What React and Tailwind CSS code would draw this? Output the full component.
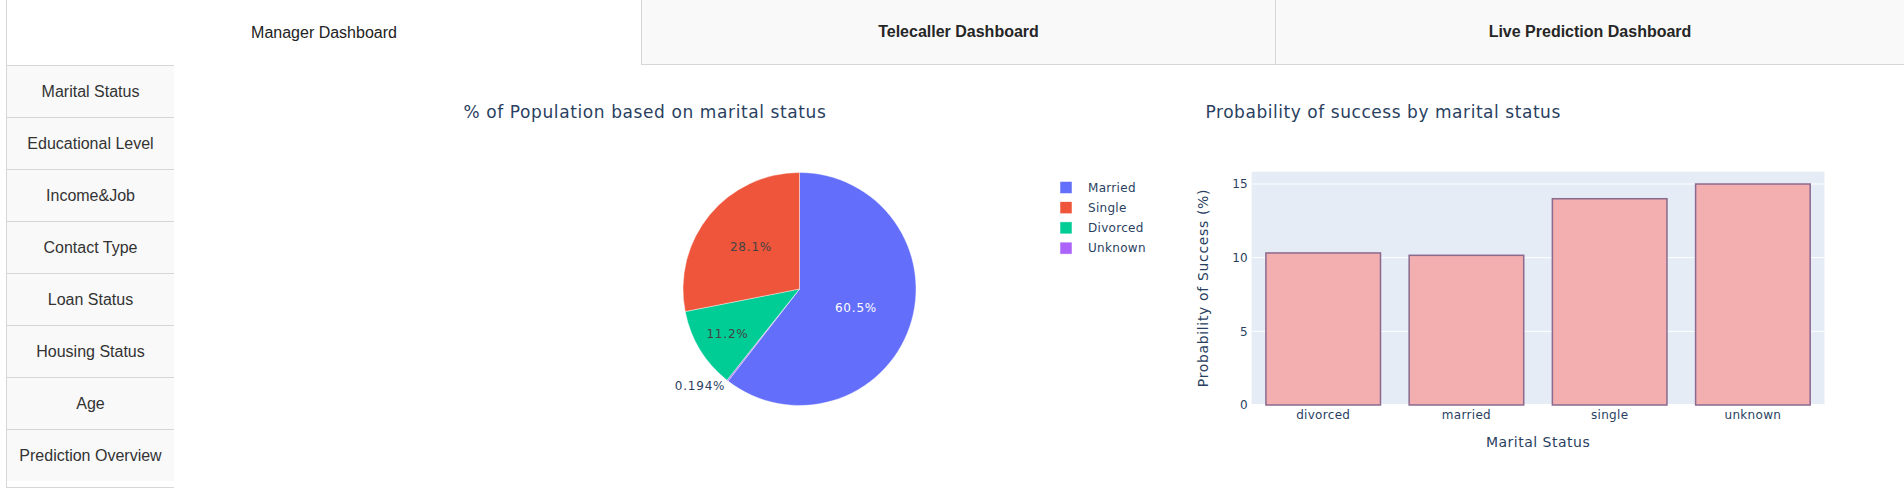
import React from "react";

const PLOT_FONT = "'DejaVu Sans', Verdana, sans-serif";

function PieChart() {
  const cx = 625.5;
  const cy = 224;
  const r = 116.5;
  const slices = [
    { v: 60.5, c: "#636efa" },
    { v: 0.194, c: "#ab63fa" },
    { v: 11.2, c: "#00cc96" },
    { v: 28.1, c: "#EF553B" },
  ];
  const total = slices.reduce((s, x) => s + x.v, 0);
  let acc = 0;
  const pt = (deg) => {
    const a = (deg * Math.PI) / 180;
    return [cx + r * Math.sin(a), cy - r * Math.cos(a)];
  };
  const paths = slices.map((s, i) => {
    const a0 = (acc / total) * 360;
    acc += s.v;
    const a1 = (acc / total) * 360;
    const [x0, y0] = pt(a0);
    const [x1, y1] = pt(a1);
    const large = a1 - a0 > 180 ? 1 : 0;
    const d = `M${cx},${cy} L${x0},${y0} A${r},${r} 0 ${large} 1 ${x1},${y1} Z`;
    return <path key={i} d={d} fill={s.c} stroke="#ffffff" strokeWidth="0.4" />;
  });
  const legend = [
    { t: "Married", c: "#636efa" },
    { t: "Single", c: "#EF553B" },
    { t: "Divorced", c: "#00cc96" },
    { t: "Unknown", c: "#ab63fa" },
  ];
  return (
    <svg width="1000" height="423" fontFamily={PLOT_FONT} className="block shrink-0">
      <text x="289.5" y="53" fontSize="17" fill="#2a3f5f" letterSpacing="0.6">
        % of Population based on marital status
      </text>
      {paths}
      <text x="682" y="247" fontSize="12" fill="#ffffff" textAnchor="middle" letterSpacing="0.8">60.5%</text>
      <text x="577" y="186" fontSize="12" fill="#444444" textAnchor="middle" letterSpacing="0.8">28.1%</text>
      <text x="553.5" y="273" fontSize="12" fill="#444444" textAnchor="middle" letterSpacing="0.8">11.2%</text>
      <text x="526" y="325" fontSize="12" fill="#2a3f5f" textAnchor="middle" letterSpacing="0.8">0.194%</text>
      {legend.map((l, i) => (
        <g key={l.t}>
          <rect x="886" y={116.5 + i * 20.2} width="12" height="12" fill={l.c} stroke="#ffffff" strokeWidth="0.5" />
          <text x="914" y={126.8 + i * 20.2} fontSize="12" fill="#2a3f5f" letterSpacing="0.3">
            {l.t}
          </text>
        </g>
      ))}
    </svg>
  );
}

function BarChart() {
  const left = 77.6;
  const right = 650.5;
  const top = 106.7;
  const bottom = 340;
  const unit = (bottom - 119) / 15;
  const cats = [
    { t: "divorced", v: 10.32 },
    { t: "married", v: 10.16 },
    { t: "single", v: 14.0 },
    { t: "unknown", v: 15.0 },
  ];
  const cw = (right - left) / 4;
  const bw = cw * 0.8;
  const ticks = [0, 5, 10, 15];
  return (
    <svg width="730" height="423" fontFamily={PLOT_FONT} className="block shrink-0">
      <text x="31.5" y="53" fontSize="17" fill="#2a3f5f" letterSpacing="0.55">
        Probability of success by marital status
      </text>
      <rect x={left} y={top} width={right - left} height={bottom - top} fill="#E5ECF6" />
      {ticks.map((t) => (
        <g key={t}>
          <line
            x1={left}
            x2={right}
            y1={bottom - t * unit}
            y2={bottom - t * unit}
            stroke="#ffffff"
            strokeWidth={t === 0 ? 2 : 1}
          />
          <text x="74" y={bottom - t * unit + 4.2} fontSize="12" fill="#2a3f5f" textAnchor="end" letterSpacing="0.3">
            {t}
          </text>
        </g>
      ))}
      {cats.map((c, i) => {
        const x = left + i * cw + (cw - bw) / 2;
        const h = c.v * unit;
        return (
          <g key={c.t}>
            <rect
              x={x}
              y={bottom - h}
              width={bw}
              height={h}
              fill="#F3AEB0"
              stroke="#8a6a8e"
              strokeWidth="1.5"
            />
            <text x={left + i * cw + cw / 2} y="354" fontSize="12" fill="#2a3f5f" textAnchor="middle" letterSpacing="0.3">
              {c.t}
            </text>
          </g>
        );
      })}
      <text
        x="0"
        y="0"
        fontSize="14"
        fill="#2a3f5f"
        textAnchor="middle"
        letterSpacing="0.65"
        transform="translate(34,223) rotate(-90)"
      >
        Probability of Success (%)
      </text>
      <text x={(left + right) / 2} y="382" fontSize="14" fill="#2a3f5f" textAnchor="middle" letterSpacing="0.5">
        Marital Status
      </text>
    </svg>
  );
}

const sideItems = [
  "Marital Status",
  "Educational Level",
  "Income&Job",
  "Contact Type",
  "Loan Status",
  "Housing Status",
  "Age",
  "Prediction Overview",
];

export default function App() {
  return (
    <div className="w-[1904px] h-[488px] overflow-hidden bg-white pl-[6px] font-['Liberation_Sans',Arial,sans-serif] text-[16px]">
      <div className="flex h-[65px]">
        <div className="w-[635px] h-full border-l border-[#d6d6d6] bg-white flex items-center justify-center text-[#222]">
          Manager Dashboard
        </div>
        <div className="w-[634px] h-full border-l border-b border-[#d6d6d6] bg-[#f9f9f9] flex items-center justify-center font-bold text-[#262626]">
          Telecaller Dashboard
        </div>
        <div className="flex-1 h-full border-l border-b border-[#d6d6d6] bg-[#f9f9f9] flex items-center justify-center font-bold text-[#262626]">
          Live Prediction Dashboard
        </div>
      </div>
      <div className="flex">
        <div className="w-[168px] shrink-0 border-l border-b border-[#d6d6d6] flex flex-col">
          {sideItems.map((t) => (
            <div
              key={t}
              className="h-[52px] border-t border-[#d6d6d6] bg-[#f9f9f9] flex items-center justify-center text-[#333]"
            >
              {t}
            </div>
          ))}
        </div>
        <div className="flex">
          <PieChart />
          <BarChart />
        </div>
      </div>
    </div>
  );
}
